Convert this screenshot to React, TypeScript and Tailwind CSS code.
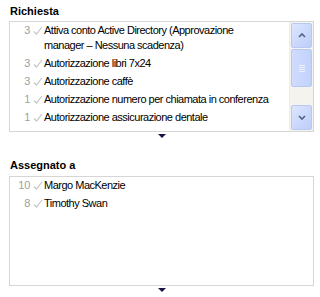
const requests = [
  { count: 3, lines: ['Attiva conto Active Directory (Approvazione', 'manager – Nessuna scadenza)'] },
  { count: 3, lines: ['Autorizzazione libri 7x24'] },
  { count: 3, lines: ['Autorizzazione caffè'] },
  { count: 1, lines: ['Autorizzazione numero per chiamata in conferenza'] },
  { count: 1, lines: ['Autorizzazione assicurazione dentale'] },
  { count: 3, lines: ['Cambio informazioni dipendente'] },
];

const assigned = [
  { count: 10, lines: ['Margo MacKenzie'] },
  { count: 8, lines: ['Timothy Swan'] },
];

const Check = () => (
  <svg width="10" height="9" viewBox="0 0 10 9" className="shrink-0">
    <path d="M1 5.5 L3.5 8 L9 1" fill="none" stroke="#c6c6c6" strokeWidth="1.2" />
  </svg>
);

const DownMarker = () => (
  <div className="flex justify-center h-[6px] items-end">
    <svg width="8" height="4" viewBox="0 0 8 4">
      <path d="M0 0 H8 L4 4 Z" fill="#141446" />
    </svg>
  </div>
);

type Item = { count: number; lines: string[] };

const Row = ({ item }: { item: Item }) => (
  <div className="flex items-start py-[1.5px] leading-[15px]">
    <span className="w-[20px] text-right text-[#a0a0a0] shrink-0 tracking-[-0.3px]">{item.count}</span>
    <span className="w-[14px] h-[15px] flex items-center justify-center shrink-0 pl-[2px]">
      <Check />
    </span>
    <span className="whitespace-nowrap text-black tracking-[-0.5px]">
      {item.lines.map((l, i) => (
        <div key={i}>{l}</div>
      ))}
    </span>
  </div>
);

const ScrollButton = ({ up }: { up: boolean }) => (
  <div className="h-[25px] rounded-[2px] border border-[#b7c9f3] bg-gradient-to-br from-[#dde6fe] to-[#bccdfa] flex items-center justify-center">
    <svg width="8" height="5" viewBox="0 0 8 5">
      <path d={up ? 'M1 4 L4 1 L7 4' : 'M1 1 L4 4 L7 1'} fill="none" stroke="#4d6185" strokeWidth="1.6" />
    </svg>
  </div>
);

const Scrollbar = () => (
  <div className="w-[24px] shrink-0 bg-[#f4f3ee] border-l border-[#ececec] flex flex-col px-[1px] py-[1px]">
    <ScrollButton up />
    <div className="h-[38px] mt-[1px] rounded-[2px] border border-[#b7c9f3] bg-gradient-to-r from-[#cfdcfd] to-[#c2d2fb] flex flex-col items-center justify-center gap-[1px]">
      <div className="w-[6px] h-px bg-[#eef2fe]" />
      <div className="w-[6px] h-px bg-[#eef2fe]" />
      <div className="w-[6px] h-px bg-[#eef2fe]" />
      <div className="w-[6px] h-px bg-[#eef2fe]" />
    </div>
    <div className="flex-1" />
    <ScrollButton up={false} />
  </div>
);

export default function App() {
  return (
    <div
      className="w-[320px] h-[297px] bg-white pl-[9px] pr-[6px] text-[11px] text-black"
      style={{ fontFamily: '"Liberation Sans", Arial, sans-serif' }}
    >
      <div className="pt-[4px] pl-px font-bold leading-[14px] mb-[3px]">Richiesta</div>
      <div className="h-[111px] border border-[#d6d6d6] flex overflow-hidden">
        <div className="flex-1 overflow-hidden">
          <div className="-mt-[1px]">
            {requests.map((r, i) => (
              <Row key={i} item={r} />
            ))}
          </div>
        </div>
        <Scrollbar />
      </div>
      <DownMarker />

      <div className="pt-[20px] pl-px font-bold leading-[14px] mb-[4px]">Assegnato a</div>
      <div className="h-[110px] border border-[#d6d6d6] overflow-hidden">
        <div className="-mt-[1px]">
          {assigned.map((r, i) => (
            <Row key={i} item={r} />
          ))}
        </div>
      </div>
      <DownMarker />
    </div>
  );
}
